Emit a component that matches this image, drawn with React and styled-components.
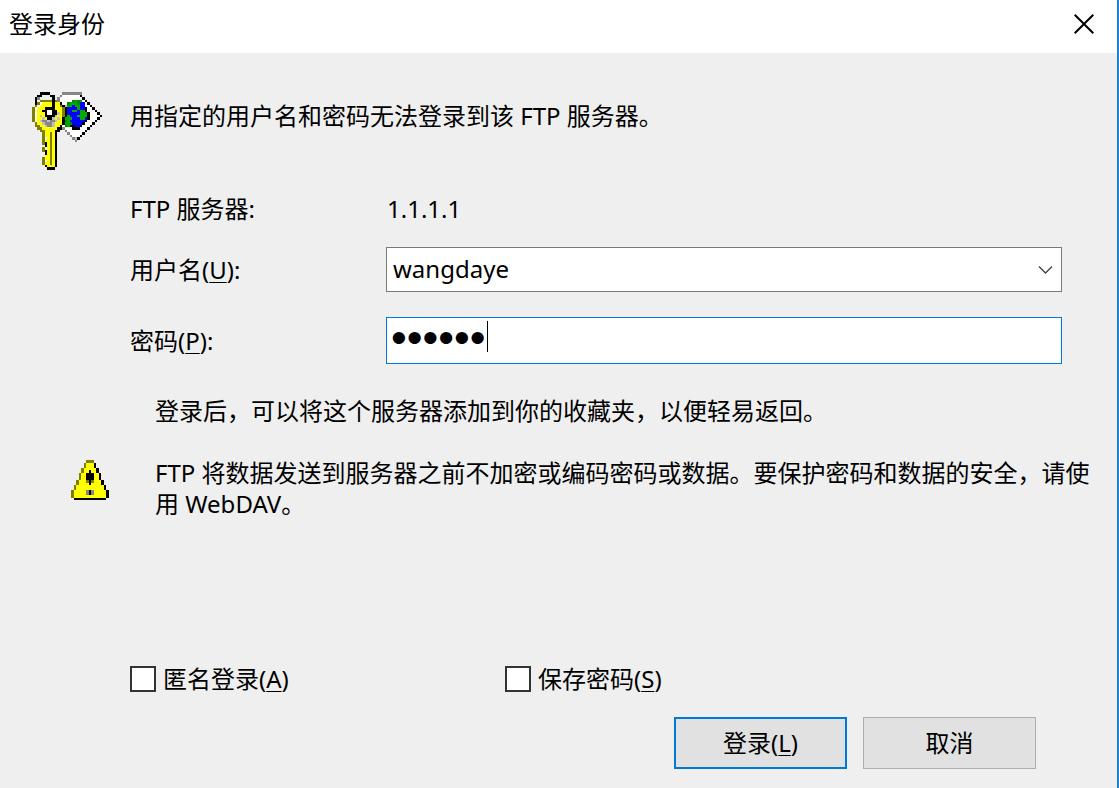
import React, { useState } from 'react';
import styled, { createGlobalStyle } from 'styled-components';

const GlobalStyle = createGlobalStyle`
    * {
        box-sizing: border-box;
    }
    body {
        margin: 0;
        background-color: #efefef;
        color: #000;
        font-family: "Noto Sans", "Noto Sans CJK SC", sans-serif;
        font-size: 24px;
        line-height: 32px;
    }
`

const Dialog = styled.div`
    display: flex;
    flex-direction: column;
    min-height: 100vh;
    background-color: #efefef;
    border-right: 2px solid #1883d7;
`

const TitleBar = styled.header`
    display: flex;
    justify-content: space-between;
    align-items: center;
    height: 53px;
    padding: 0 12px 5px 9px;
    background-color: #fff;
`

const Title = styled.h1`
    margin: 0;
    font-size: 24px;
    font-weight: 400;
`

const CloseButton = styled.button`
    display: flex;
    align-items: center;
    justify-content: center;
    width: 42px;
    height: 42px;
    padding: 0;
    border: none;
    background: none;
`

const Form = styled.form`
    flex: 1;
    display: flex;
    flex-direction: column;
`

const Message = styled.div`
    display: flex;
    gap: 28px;
    padding: 39px 24px 0 32px;
    p {
        margin: 8px 0 0;
    }
`

const PixelSvg = styled.svg`
    display: block;
    flex: none;
`

const Fields = styled.div`
    display: flex;
    flex-direction: column;
    gap: 25px;
    padding: 24px 55px 0 130px;
`

const Field = styled.div`
    display: grid;
    grid-template-columns: 256px 1fr;
    align-items: center;
    line-height: 26px;
`

const ServerName = styled.span`
    padding-left: 1px;
`

const Key = styled.span`
    text-decoration: underline;
    text-decoration-thickness: 1px;
    text-underline-offset: 3px;
`

const ControlBox = styled.div`
    position: relative;
    display: flex;
    height: ${props => props.$tall ? '47px' : '45px'};
    border: 1px solid ${props => props.$active ? '#0078d7' : '#7a7a7a'};
    background-color: #fff;
`

const UserSelect = styled.select`
    flex: 1;
    appearance: none;
    border: none;
    outline: none;
    padding: 0 40px 2px 6px;
    background: none;
    color: #000;
    font: inherit;
    line-height: 36px;
`

const Chevron = styled.svg`
    position: absolute;
    right: 8px;
    top: 17px;
    pointer-events: none;
`

const PasswordInput = styled.input`
    flex: 1;
    min-width: 0;
    border: none;
    outline: none;
    padding: 0 4px 6px;
    background: none;
    color: #000;
    caret-color: transparent;
    font-family: "Liberation Sans", Arial, sans-serif;
    font-size: 45px;
    line-height: 39px;
`

const Caret = styled.span`
    position: absolute;
    left: 100px;
    top: 3px;
    width: 1px;
    height: 31px;
    background-color: #000;
`

const Note = styled.p`
    margin: 0;
    padding: 31px 22px 0 155px;
`

const Warning = styled.div`
    display: flex;
    align-items: flex-start;
    gap: 44px;
    padding: 30px 22px 0 71px;
    line-height: 31px;
    svg {
        margin-top: 3px;
    }
    p {
        margin: 0;
    }
`

const Checks = styled.div`
    display: grid;
    grid-template-columns: 375px 1fr;
    margin-top: auto;
    padding: 24px 55px 0 130px;
`

const CheckLabel = styled.label`
    display: flex;
    align-items: center;
    gap: 7px;
`

const Checkbox = styled.input`
    appearance: none;
    width: 26px;
    height: 26px;
    margin: 0;
    border: 2px solid #333;
    background-color: #fff;
    &:checked {
        box-shadow: inset 0 0 0 4px #fff;
        background-color: #333;
    }
`

const Buttons = styled.div`
    display: flex;
    justify-content: flex-end;
    gap: 16px;
    padding: 22px 81px 19px;
`

const Button = styled.button`
    width: 173px;
    height: 52px;
    padding: 0;
    border: ${props => props.$primary ? '2px solid #0078d7' : '1px solid #adadad'};
    background-color: #e1e1e1;
    color: #000;
    font: inherit;
`

const COLORS = {
    K: '#000000',
    O: '#808000',
    Y: '#ffff00',
    W: '#ffffff',
    L: '#c0c0c0',
    D: '#868686',
    B: '#0000ff',
    N: '#00aa00',
    g: '#008800',
};

const KEY_ICON = [
    '...KKKK.....DDDDDDDD........',
    '..KK...KK..DWWWWWWWK........',
    '.KD.....K.DWWWWWWWWWK.......',
    '.K.OOOOOKODWWWWWgNgNWK......',
    '.KOWYYYYKYYKWWgNNNgBBWK.....',
    '.OWYYYYYKYYOKLNNBNNBBWWK....',
    'OWYYYKKKKYYYOKBBBBNBBKWWK...',
    'OWYYKKWWKKYYOKBBNNBNNKWWWK..',
    'OWYYYKWWKKLYOKBBBBBNNNKWWWK.',
    'OWYLYKKKKLYYOKNBBBNNNNKWWWWK',
    'OWYYLYKKLYLYKNNNBBBNNBKWWWK.',
    'OWYLDDLDDLYYKgNBBBBBBKWWWK..',
    '.OYYLDDDLYYYKNNgBBBBKWWWK...',
    '.OOYYLDDLYYKWgNKKBBKWWWK....',
    '..OOYYYYYYKKDWWWKKKWWWK.....',
    '...OOYYYYKK..DWWWWWWWK......',
    '....OYYOYK....DWWWWWK.......',
    '....OYYOYK.....DWWWK........',
    '....OWYOYK......DLK.........',
    '....OYYOYK.......D..........',
    '....OKYOYK..................',
    '.....KYOYK..................',
    '....OWYOYK..................',
    '....OKYOYK..................',
    '.....KYOYK..................',
    '.....YYOYK..................',
    '....OYYOYK..................',
    '....OWYOYK..................',
    '....OYYOYK..................',
    '.....KYYYK..................',
    '......KKK...................',
];

const WARNING_ICON = [
    '......OOO......',
    '.....OYYYK.....',
    '.....OYYYK.....',
    '....OYYYYYK....',
    '....OYYKYYK....',
    '...OYYKKKYYK...',
    '...OYYKKKYYK...',
    '...OYYKKKYYK...',
    '..OYYYOKOYYYK..',
    '..OYYYYKYYYYK..',
    '.OYYYYYYYYYYYK.',
    '.OYYYYYYYYYYYK.',
    'OYYYYYDKDYYYYYK',
    'OYYYYYDKDYYYYYK',
    'OYYYYYYYYYYYYYK',
    '.KKKKKKKKKKKKK.',
];

const PixelIcon = ({ rows, width, height, cols, lines }) => (
    <PixelSvg width={width} height={height} viewBox={`0 0 ${cols} ${lines}`} shapeRendering="crispEdges" aria-hidden="true">
        {rows.map((row, y) =>
            row.split('').map((c, x) => COLORS[c] && (
                <rect key={`${x}-${y}`} x={x} y={y} width="1" height="1" fill={COLORS[c]} />
            ))
        )}
    </PixelSvg>
);

const App = () => {
    const [password, setPassword] = useState('123456');

    return (
        <Dialog>
            <GlobalStyle />
            <TitleBar>
                <Title>登录身份</Title>
                <CloseButton type="button" aria-label="关闭">
                    <svg width="20" height="20" viewBox="0 0 20 20" fill="none" stroke="#000" strokeWidth="2">
                        <path d="M0.7 0.7 19.3 19.3M19.3 0.7 0.7 19.3" />
                    </svg>
                </CloseButton>
            </TitleBar>
            <Form onSubmit={e => e.preventDefault()}>
                <Message>
                    <PixelIcon rows={KEY_ICON} width={70} height={80} cols={28} lines={32} />
                    <p>用指定的用户名和密码无法登录到该 FTP 服务器。</p>
                </Message>
                <Fields>
                    <Field>
                        <span>FTP 服务器:</span>
                        <ServerName>1.1.1.1</ServerName>
                    </Field>
                    <Field>
                        <label htmlFor="user">用户名(<Key>U</Key>):</label>
                        <ControlBox>
                            <UserSelect id="user" defaultValue="wangdaye">
                                <option value="wangdaye">wangdaye</option>
                            </UserSelect>
                            <Chevron width="15" height="10" viewBox="0 0 15 10" fill="none" stroke="#444" strokeWidth="1.4">
                                <path d="M1 1.5 7.5 8 14 1.5" />
                            </Chevron>
                        </ControlBox>
                    </Field>
                    <Field>
                        <label htmlFor="password">密码(<Key>P</Key>):</label>
                        <ControlBox $tall $active>
                            <PasswordInput
                                id="password"
                                type="password"
                                value={password}
                                onChange={e => setPassword(e.target.value)}
                            />
                            <Caret />
                        </ControlBox>
                    </Field>
                </Fields>
                <Note>登录后，可以将这个服务器添加到你的收藏夹，以便轻易返回。</Note>
                <Warning>
                    <PixelIcon rows={WARNING_ICON} width={40} height={40} cols={16} lines={16} />
                    <p>FTP 将数据发送到服务器之前不加密或编码密码或数据。要保护密码和数据的安全，请使用 WebDAV。</p>
                </Warning>
                <Checks>
                    <CheckLabel>
                        <Checkbox type="checkbox" />
                        <span>匿名登录(<Key>A</Key>)</span>
                    </CheckLabel>
                    <CheckLabel>
                        <Checkbox type="checkbox" />
                        <span>保存密码(<Key>S</Key>)</span>
                    </CheckLabel>
                </Checks>
                <Buttons>
                    <Button type="submit" $primary>登录(<Key>L</Key>)</Button>
                    <Button type="button">取消</Button>
                </Buttons>
            </Form>
        </Dialog>
    );
};

export default App;
